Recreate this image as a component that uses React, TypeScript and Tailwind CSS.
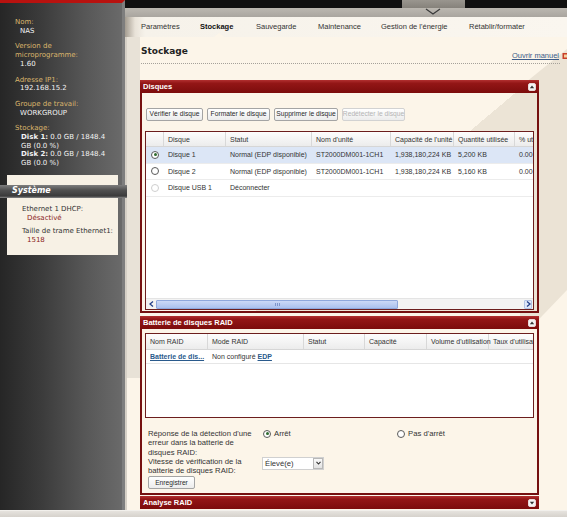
import React from "react";

function CollapseBtn({ down = false }: { down?: boolean }) {
  return (
    <span className="w-[8px] h-[8px] rounded-[2px] bg-[#f4f4f4] border border-[#e8d8d8] flex items-center justify-center">
      <svg width="6" height="4" viewBox="0 0 6 4">
        <path d={down ? "M0.8 0.8 L5.2 0.8 L3 3.4Z" : "M0.8 3.2 L5.2 3.2 L3 0.6Z"} fill="#333" />
      </svg>
    </span>
  );
}

function PanelHeader({ title, down = false }: { title: string; down?: boolean }) {
  return (
    <div className="h-[13px] flex items-center justify-between px-[3px] bg-[linear-gradient(#b23030,#931616_25%,#7c0c0c)] text-white font-bold text-[7.5px] leading-none">
      <span>{title}</span>
      <CollapseBtn down={down} />
    </div>
  );
}

function Radio({ checked = false, disabled = false }: { checked?: boolean; disabled?: boolean }) {
  return (
    <span
      className={`w-[8px] h-[8px] rounded-full border bg-white flex items-center justify-center ${
        disabled ? "border-[#cfcfcf]" : "border-[#5a5a5a]"
      }`}
    >
      {checked && <span className="w-[3px] h-[3px] rounded-full bg-[#2f6b2f]" />}
    </span>
  );
}

const diskCols = ["w-[18px]", "w-[62px]", "w-[86px]", "w-[79px]", "w-[63px]", "w-[61px]", "w-[40px]"];
const diskHead = ["", "Disque", "Statut", "Nom d'unité", "Capacité de l'unité", "Quantité utilisée", "% utilisé"];
const diskRows = [
  { sel: true, dis: false, cells: ["Disque 1", "Normal (EDP disponible)", "ST2000DM001-1CH1", "1,938,180,224 KB", "5,200 KB", "0.00 %"] },
  { sel: false, dis: false, cells: ["Disque 2", "Normal (EDP disponible)", "ST2000DM001-1CH1", "1,938,180,224 KB", "5,160 KB", "0.00 %"] },
  { sel: false, dis: true, cells: ["Disque USB 1", "Déconnecter", "", "", "", ""] },
];

const raidCols = ["w-[62px]", "w-[96px]", "w-[61px]", "w-[62px]", "w-[62px]", "w-[60px]"];
const raidHead = ["Nom RAID", "Mode RAID", "Statut", "Capacité", "Volume d'utilisation", "Taux d'utilisation"];

function Btn({ label, disabled = false, w }: { label: string; disabled?: boolean; w: string }) {
  return (
    <span
      className={`${w} h-[13px] shrink-0 flex items-center justify-center whitespace-nowrap rounded-[2px] border text-[6.7px] leading-none bg-[linear-gradient(#ffffff,#ececec)] ${
        disabled ? "border-[#d2d2d2] text-[#b4b4b4]" : "border-[#a4a4a4] text-[#2a2a2a]"
      }`}
    >
      {label}
    </span>
  );
}

export default function App() {
  return (
    <div className="w-[567px] h-[517px] overflow-hidden flex flex-col bg-[#dedad4] [font-family:'Liberation_Sans',Arial,sans-serif]">
      <div className="flex h-[510px]">
        {/* Sidebar */}
        <aside className="w-[125px] shrink-0 h-full flex flex-col border-t-[3px] border-t-[#b8120f] border-r-[3px] border-r-[#7e7e7e] bg-[linear-gradient(to_right,#262626,#3c3c3c_35%,#575757_70%,#6a6a6a)] [font-family:'DejaVu_Sans',Verdana,sans-serif] text-[7px] leading-[8.7px]">
          <div className="pt-[15px] pl-[15px] flex flex-col gap-[7px]">
            <div>
              <div className="text-[#dab56c]">Nom:</div>
              <div className="pl-[5px] text-[#f2f2f2]">NAS</div>
            </div>
            <div>
              <div className="text-[#dab56c]">Version de</div>
              <div className="text-[#dab56c]">microprogramme:</div>
              <div className="pl-[5px] text-[#f2f2f2]">1.60</div>
            </div>
            <div>
              <div className="text-[#dab56c]">Adresse IP1:</div>
              <div className="pl-[5px] text-[#f2f2f2]">192.168.15.2</div>
            </div>
            <div>
              <div className="text-[#dab56c]">Groupe de travail:</div>
              <div className="pl-[5px] text-[#f2f2f2]">WORKGROUP</div>
            </div>
            <div>
              <div className="text-[#dab56c]">Stockage:</div>
              <div className="pl-[6px] text-[#f2f2f2]">
                <span className="font-bold">Disk 1:</span> 0.0 GB / 1848.4
              </div>
              <div className="pl-[6px] text-[#f2f2f2]">GB (0.0 %)</div>
              <div className="pl-[6px] text-[#f2f2f2]">
                <span className="font-bold">Disk 2:</span> 0.0 GB / 1848.4
              </div>
              <div className="pl-[6px] text-[#f2f2f2]">GB (0.0 %)</div>
            </div>
          </div>
          <div className="mt-[7px] ml-[7px] w-[111px] h-[80px] bg-[#f7f1e5] pt-[10px] flex flex-col">
            <div className="relative z-10 -ml-[7px] w-[127px] h-[13px] flex items-center pl-[12px] bg-[linear-gradient(#7e7e7e,#505050_40%,#3a3a3a_85%,#8a8a8a)] text-white font-bold italic text-[8px] leading-none">
              Système
            </div>
            <div className="pl-[15px] pt-[7px] text-[#333] flex flex-col gap-[5px]">
              <div>
                <div>Ethernet 1 DHCP:</div>
                <div className="pl-[5px] text-[#8a1c1c]">Désactivé</div>
              </div>
              <div>
                <div>Taille de trame Ethernet1:</div>
                <div className="pl-[5px] text-[#8a1c1c]">1518</div>
              </div>
            </div>
          </div>
        </aside>

        {/* Main */}
        <div className="flex-1 flex flex-col min-w-0">
          <div className="h-[8px] flex bg-[#111]">
            <div className="w-[277px]" />
            <div className="w-[63px] bg-[linear-gradient(#9a968f,#86827b)]" />
          </div>
          <div className="h-[9px] bg-[linear-gradient(#bcb8b1,#a9a59f)] flex">
            <div className="w-[300px]" />
            <svg width="16" height="8" viewBox="0 0 16 8">
              <path d="M1 1 L8 6 L15 1" stroke="#3a3a3a" strokeWidth="1.2" fill="none" />
            </svg>
          </div>
          <div className="relative h-[20px] flex items-center bg-[linear-gradient(to_right,#a49c90,#e8e2d8_10px,#f6f2ea_20px,#faf6ef)] text-[7.5px] text-[#333] leading-none">
            <div className="w-[16px]" />
            <div className="w-[59px]">Paramètres</div>
            <div className="w-[56px] font-bold text-[#111]">Stockage</div>
            <div className="w-[62px]">Sauvegarde</div>
            <div className="w-[63px]">Maintenance</div>
            <div className="w-[88px]">Gestion de l&apos;énergie</div>
            <div>Rétablir/formater</div>
            <svg className="absolute left-[89px] bottom-0" width="10" height="4" viewBox="0 0 10 4">
              <path d="M0 4 L5 0 L10 4Z" fill="#fcf5e9" />
            </svg>
          </div>

          {/* Content */}
          <div className="relative flex-1 bg-[#fcf5e9]">
            <svg className="absolute inset-0" width="442" height="473" viewBox="0 0 442 473">
              <rect x="0" y="0" width="2" height="473" fill="#d6d0c6" />
              <rect x="2" y="0" width="13" height="341" fill="#e8e2d7" />
              <polygon points="395,50 442,12 442,253 395,302" fill="#ebe3d5" />
            </svg>
            <div className="relative flex flex-col pl-[15px]">
              <div className="mt-[8px] ml-[1px] w-[419px] h-[19px] flex justify-between border-b border-dotted border-[#a5a19a]">
                <div className="[font-family:'DejaVu_Sans',Verdana,sans-serif] font-bold text-[9px] leading-[12px] text-[#222]">
                  Stockage
                </div>
                <div className="self-end mb-[3px] flex items-center gap-[3px] -mr-[10px]">
                  <span className="text-[7.5px] leading-[9px] underline text-[#3b5b88]">Ouvrir manuel</span>
                  <svg width="8" height="8" viewBox="0 0 8 8">
                    <rect x="0.5" y="1" width="6" height="6" fill="#c8402a" />
                    <rect x="2" y="2.5" width="3" height="3" fill="#f6d0a0" />
                  </svg>
                </div>
              </div>

              {/* Disques panel */}
              <div className="mt-[16px] w-[399px] flex flex-col">
                <PanelHeader title="Disques" />
                <div className="h-[220px] border-x-2 border-b-2 border-[#751010] bg-[linear-gradient(140deg,#fcf5e9_57%,#ece4d6_57%)] flex flex-col px-[3px] pb-[1px]">
                  <div className="mt-[15px] pl-[1px] flex gap-[4px]">
                    <Btn label="Vérifier le disque" w="w-[57px]" />
                    <Btn label="Formater le disque" w="w-[63px]" />
                    <Btn label="Supprimer le disque" w="w-[64px]" />
                    <Btn label="Redétecter le disque" w="w-[63px]" disabled />
                  </div>
                  <div className="mt-[10px] flex-1 border border-[#6c1e1e] bg-white flex flex-col overflow-hidden text-[7px] leading-none text-[#333]">
                    <div className="h-[15px] flex shrink-0 bg-[linear-gradient(#fdfdfd,#ececec)] border-b border-[#d6d6d6]">
                      {diskHead.map((h, i) => (
                        <div
                          key={i}
                          className={`${diskCols[i]} shrink-0 h-full flex items-center pl-[4px] whitespace-nowrap border-r border-[#d8d8d8]`}
                        >
                          {h}
                        </div>
                      ))}
                    </div>
                    {diskRows.map((r, ri) => (
                      <div
                        key={ri}
                        className={`h-[16.5px] flex shrink-0 border-b border-[#ececec] ${r.sel ? "bg-[#dce6f6]" : "bg-white"}`}
                      >
                        <div className={`${diskCols[0]} shrink-0 flex items-center justify-center`}>
                          <Radio checked={r.sel} disabled={r.dis} />
                        </div>
                        {r.cells.map((c, ci) => (
                          <div key={ci} className={`${diskCols[ci + 1]} shrink-0 flex items-center pl-[4px] whitespace-nowrap`}>
                            {c}
                          </div>
                        ))}
                      </div>
                    ))}
                    <div className="flex-1" />
                    <div className="h-[11px] shrink-0 flex items-center bg-[#f3f3f3] border-t border-[#e4e4e4] pl-[1px] pr-[1px]">
                      <span className="w-[8px] h-[9px] flex items-center justify-center">
                        <svg width="5" height="6" viewBox="0 0 5 6">
                          <path d="M4 0.5 L1 3 L4 5.5" stroke="#23408a" strokeWidth="1.3" fill="none" />
                        </svg>
                      </span>
                      <span className="ml-[1px] w-[242px] h-[9px] rounded-[1px] border border-[#8fa7dc] bg-[linear-gradient(#ccd9f7,#aac0ee)] flex items-center justify-center gap-[1px]">
                        <span className="w-[1px] h-[3px] bg-[#7e95cc]" />
                        <span className="w-[1px] h-[3px] bg-[#7e95cc]" />
                        <span className="w-[1px] h-[3px] bg-[#7e95cc]" />
                      </span>
                      <span className="flex-1" />
                      <span className="w-[8px] h-[9px] rounded-[1px] border border-[#b2c2e4] bg-[#dfe7f8] flex items-center justify-center">
                        <svg width="5" height="6" viewBox="0 0 5 6">
                          <path d="M1 0.5 L4 3 L1 5.5" stroke="#23408a" strokeWidth="1.3" fill="none" />
                        </svg>
                      </span>
                    </div>
                  </div>
                </div>
              </div>

              {/* RAID panel */}
              <div className="mt-[3px] w-[399px] flex flex-col">
                <PanelHeader title="Batterie de disques RAID" />
                <div className="h-[166px] border-x-2 border-b-2 border-[#751010] bg-[#fcf5e9] flex flex-col px-[3px]">
                  <div className="mt-[4px] h-[85px] border border-[#6c1e1e] bg-white flex flex-col overflow-hidden text-[7px] leading-none text-[#333]">
                    <div className="h-[16px] flex shrink-0 bg-[linear-gradient(#fdfdfd,#ececec)] border-b border-[#d6d6d6]">
                      {raidHead.map((h, i) => (
                        <div
                          key={i}
                          className={`${raidCols[i]} shrink-0 h-full flex items-center pl-[4px] whitespace-nowrap border-r border-[#d8d8d8]`}
                        >
                          {h}
                        </div>
                      ))}
                    </div>
                    <div className="h-[14px] flex shrink-0 border-b border-[#e6e6e6]">
                      <div className={`${raidCols[0]} shrink-0 flex items-center pl-[4px] whitespace-nowrap`}>
                        <span className="underline font-bold text-[#2a5a8c]">Batterie de dis...</span>
                      </div>
                      <div className={`${raidCols[1]} shrink-0 flex items-center pl-[4px] whitespace-nowrap`}>
                        Non configuré&nbsp;<span className="underline font-bold text-[#2a5a8c]">EDP</span>
                      </div>
                    </div>
                  </div>
                  <div className="mt-[11px] pl-[3px] text-[7.7px] leading-[9.3px] text-[#333]">
                    <div className="flex">
                      <div className="w-[114px] shrink-0">
                        Réponse de la détection d&apos;une erreur dans la batterie de disques RAID:
                      </div>
                      <div className="w-[135px] shrink-0 flex items-start gap-[3px] pl-[1px]">
                        <span className="h-[9.3px] flex items-center">
                          <Radio checked />
                        </span>
                        <span>Arrêt</span>
                      </div>
                      <div className="flex items-start gap-[3px]">
                        <span className="h-[9.3px] flex items-center">
                          <Radio />
                        </span>
                        <span>Pas d&apos;arrêt</span>
                      </div>
                    </div>
                    <div className="flex">
                      <div className="w-[114px] shrink-0">Vitesse de vérification de la batterie de disques RAID:</div>
                      <div className="w-[62px] h-[13px] flex items-center justify-between bg-white border border-[#d0d0d0]">
                        <span className="pl-[2px]">Élevé(e)</span>
                        <span className="w-[10px] h-[11px] border border-[#b8b8b8] bg-[linear-gradient(#fafafa,#e2e2e2)] flex items-center justify-center">
                          <svg width="5" height="4" viewBox="0 0 5 4">
                            <path d="M0.5 0.8 L2.5 3 L4.5 0.8" stroke="#333" strokeWidth="1.1" fill="none" />
                          </svg>
                        </span>
                      </div>
                    </div>
                    <div className="mt-[1px]">
                      <Btn label="Enregistrer" w="w-[47px]" />
                    </div>
                  </div>
                </div>
              </div>

              {/* Analyse RAID */}
              <div className="mt-[1px] w-[399px]">
                <PanelHeader title="Analyse RAID" down />
              </div>
            </div>
          </div>
        </div>
      </div>
      <div className="h-[7px] border-t border-[#f2f0ec] bg-[linear-gradient(#e6e3de,#d6d2cc)]" />
    </div>
  );
}
